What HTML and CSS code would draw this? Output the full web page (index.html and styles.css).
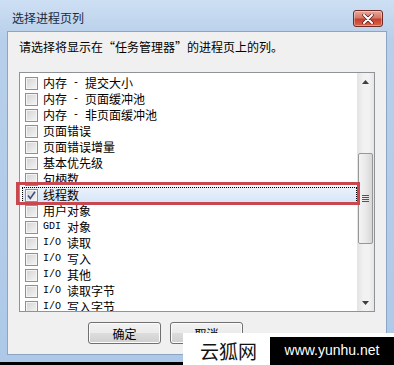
FILE: index.html
```html
<!DOCTYPE html>
<html lang="zh-CN">
<head>
    <meta charset="UTF-8">
    <meta name="viewport" content="width=device-width, initial-scale=1.0">
    <title>选择进程页列</title>
    <link rel="stylesheet" href="styles.css">
</head>
<body>
    <div class="window">
        <div class="titlebar">
            <span class="title">选择进程页列</span>
            <button class="close" type="button" aria-label="关闭">
                <svg width="12" height="10" viewBox="0 0 12 10">
                    <path d="M2 1 L10 9 M10 1 L2 9" stroke="#5a1a16" stroke-width="3.4" stroke-linecap="round"/>
                    <path d="M2 1 L10 9 M10 1 L2 9" stroke="#fff" stroke-width="2" stroke-linecap="round"/>
                </svg>
            </button>
        </div>
        <div class="client">
            <p class="prompt">请选择将显示在“任务管理器”的进程页上的列。</p>
            <div class="listbox">
                <ul class="items">
                    <li class="row"><span class="check"></span>内存<span class="lat"> - </span>提交大小</li>
                    <li class="row"><span class="check"></span>内存<span class="lat"> - </span>页面缓冲池</li>
                    <li class="row"><span class="check"></span>内存<span class="lat"> - </span>非页面缓冲池</li>
                    <li class="row"><span class="check"></span>页面错误</li>
                    <li class="row"><span class="check"></span>页面错误增量</li>
                    <li class="row"><span class="check"></span>基本优先级</li>
                    <li class="row"><span class="check"></span>句柄数</li>
                    <li class="row selected"><span class="check checked">
                        <svg width="11" height="11" viewBox="0 0 11 11"><path d="M2 5.5 L4.3 8.5 L9 1.8" fill="none" stroke="#3d4f7c" stroke-width="1.6"/></svg>
                    </span>线程数</li>
                    <li class="row"><span class="check"></span>用户对象</li>
                    <li class="row"><span class="check"></span><span class="lat">GDI </span>对象</li>
                    <li class="row"><span class="check"></span><span class="lat">I/O </span>读取</li>
                    <li class="row"><span class="check"></span><span class="lat">I/O </span>写入</li>
                    <li class="row"><span class="check"></span><span class="lat">I/O </span>其他</li>
                    <li class="row"><span class="check"></span><span class="lat">I/O </span>读取字节</li>
                    <li class="row"><span class="check"></span><span class="lat">I/O </span>写入字节</li>
                </ul>
                <div class="scrollbar">
                    <div class="arrow">
                        <svg width="7" height="4" viewBox="0 0 7 4"><path d="M0 4 L3.5 0 L7 4 Z" fill="#404040"/></svg>
                    </div>
                    <div class="track">
                        <div class="thumb">
                            <span class="grip"></span>
                        </div>
                    </div>
                    <div class="arrow">
                        <svg width="7" height="4" viewBox="0 0 7 4"><path d="M0 0 L3.5 4 L7 0 Z" fill="#404040"/></svg>
                    </div>
                </div>
            </div>
            <div class="buttons">
                <button class="btn" type="button">确定</button>
                <button class="btn" type="button">取消</button>
            </div>
        </div>
    </div>

    <div class="marker"></div>

    <div class="watermark">
        <span class="wm-name">云狐网</span>
        <span class="wm-url">www.yunhu.net</span>
    </div>
</body>
</html>
```

FILE: styles.css
```css
body {
    margin: 0;
    background: #000;
    font-family: "Noto Sans CJK SC", "Liberation Sans", sans-serif;
    font-size: 12px;
    color: #000;
    width: 394px;
    height: 365px;
    overflow: hidden;
}
.window {
    background: linear-gradient(#cddff3, #b7cfea 40px, #aec9e8);
    padding: 0 7px 7px 7px;
}
.titlebar {
    height: 31px;
    box-sizing: border-box;
    display: flex;
    justify-content: space-between;
    align-items: flex-start;
    padding: 10px 4px 0 5px;
}
.title {
    line-height: 16px;
    color: #1e2a3a;
}
.close {
    width: 30px;
    height: 17px;
    border: 1px solid #6f2b26;
    border-radius: 3px;
    background: linear-gradient(#e9a99c, #d67866 45%, #c4412e 55%, #d9654d);
    box-shadow: inset 0 0 0 1px rgba(255, 255, 255, 0.35);
    padding: 0;
    display: flex;
    align-items: center;
    justify-content: center;
}
.client {
    background: #f0f0f0;
    border: 1px solid #8ca5c3;
    padding: 7px 11px 10px 11px;
}
.prompt {
    margin: 0 0 17px 0;
    line-height: 16px;
}
.listbox {
    height: 240px;
    box-sizing: border-box;
    border: 1px solid #8e9299;
    background: #fff;
    display: flex;
}
.items {
    flex: 1;
    list-style: none;
    margin: 0;
    padding: 2px 0 0 0;
    overflow: hidden;
}
.row {
    height: 16px;
    box-sizing: border-box;
    display: flex;
    align-items: center;
    padding-left: 5px;
    line-height: 16px;
    white-space: nowrap;
}
.lat {
    font-family: "Liberation Mono", monospace;
    font-size: 10px;
    white-space: pre;
}
.check {
    width: 13px;
    height: 13px;
    box-sizing: border-box;
    border: 1px solid #8f8f8f;
    background: linear-gradient(135deg, #d2d2d2, #f6f6f6);
    box-shadow: inset 0 0 0 1px #f4f4f4;
    margin-right: 5px;
    flex-shrink: 0;
    display: flex;
    align-items: center;
    justify-content: center;
}
.selected {
    margin-left: 2px;
    padding-left: 2px;
    border: 1px dotted #000;
    background: linear-gradient(#eaf2fb, #d6e6f8);
}
.scrollbar {
    width: 17px;
    display: flex;
    flex-direction: column;
    background: linear-gradient(90deg, #e3e3e3, #f2f2f2 40%, #f2f2f2 70%, #e6e6e6);
}
.arrow {
    height: 17px;
    display: flex;
    align-items: center;
    justify-content: center;
}
.track {
    flex: 1;
    padding-top: 63px;
}
.thumb {
    height: 91px;
    margin: 0 1px;
    box-sizing: border-box;
    border: 1px solid #979797;
    border-radius: 2px;
    background: linear-gradient(90deg, #f3f3f3, #e9e9e9 50%, #d7d7d7);
    display: flex;
    align-items: center;
    justify-content: center;
}
.grip {
    width: 7px;
    height: 7px;
    background: repeating-linear-gradient(#555 0, #555 1px, transparent 1px, transparent 2px);
}
.buttons {
    display: flex;
    gap: 9px;
    margin-top: 10px;
    padding-left: 69px;
}
.btn {
    width: 73px;
    height: 22px;
    border: 1px solid #707070;
    border-radius: 3px;
    background: linear-gradient(#f2f2f2, #ebebeb 50%, #dddddd 50%, #cfcfcf);
    box-shadow: inset 0 0 0 1px #fcfcfc;
    font-family: "Noto Sans CJK SC", sans-serif;
    font-size: 12px;
    color: #000;
    padding: 0;
}
.marker {
    position: absolute;
    left: 16px;
    top: 182px;
    width: 344px;
    height: 23px;
    box-sizing: border-box;
    border: 3px solid #c9484f;
}
.watermark {
    position: absolute;
    left: 183px;
    top: 333px;
    width: 211px;
    height: 32px;
    background: #fff;
    display: flex;
    align-items: flex-end;
}
.wm-name {
    font-family: "Noto Sans CJK SC", sans-serif;
    font-size: 19px;
    line-height: 28px;
    margin-left: 17px;
    color: #111;
}
.wm-url {
    margin-left: auto;
    width: 124px;
    height: 28px;
    background: #000;
    color: #fff;
    font-family: "Liberation Sans", sans-serif;
    font-size: 14px;
    line-height: 26px;
    text-align: center;
}
```
